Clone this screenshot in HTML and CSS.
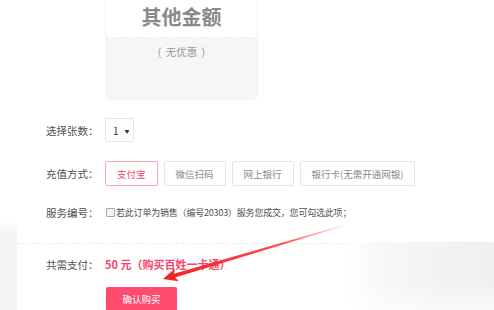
FILE: index.html
```html
<!DOCTYPE html>
<html lang="zh-CN">
<head>
  <meta charset="UTF-8" />
  <meta name="viewport" content="width=device-width, initial-scale=1.0" />
  <title>购买百姓一卡通</title>
  <link rel="stylesheet" href="styles.css">
</head>

<body>
  <div class="wrap">
    <div class="gutter"></div>

    <div class="main">
      <div class="card">
        <div class="card-top">其他金额</div>
        <div class="card-bottom">( 无优惠 )</div>
      </div>

      <div class="row row-count">
        <div class="label">选择张数：</div>
        <div class="select">1 <span class="caret">▼</span></div>
      </div>

      <div class="row row-pay">
        <div class="label">充值方式：</div>
        <div class="pay-list">
          <span class="pay-btn active">支付宝</span>
          <span class="pay-btn">微信扫码</span>
          <span class="pay-btn">网上银行</span>
          <span class="pay-btn">银行卡(无需开通网银)</span>
        </div>
      </div>

      <div class="row row-service">
        <div class="label">服务编号：</div>
        <label class="check"><span class="box"></span>若此订单为销售（编号20303）服务您成交，您可勾选此项；</label>
      </div>

      <div class="divider"></div>

      <div class="row row-total">
        <div class="label">共需支付：</div>
        <div class="total">50 元（购买百姓一卡通）</div>
      </div>

      <button class="buy-btn">确认购买</button>
    </div>
  </div>

  <div class="shade"></div>

  <svg class="arrow" width="494" height="310" viewBox="0 0 494 310">
    <defs>
      <linearGradient id="fade" x1="342" y1="226" x2="170" y2="276" gradientUnits="userSpaceOnUse">
        <stop offset="0" stop-color="#ff3b3b" stop-opacity="0.15" />
        <stop offset="0.35" stop-color="#ff2d2d" stop-opacity="0.85" />
        <stop offset="1" stop-color="#f52222" />
      </linearGradient>
    </defs>
    <polygon points="342.1,226.4 341.9,225.6 173,273.9 174.1,277.8" fill="url(#fade)" />
    <polygon points="163,279 175,268.6 173.6,275.4 178.6,281.2" fill="#f52222" />
  </svg>
</body>
</html>
```

FILE: styles.css
```css
:root {
  --pink: #f7456d;
  --pink-btn: #ff4b70;
  --pink-line: #ffa3b6;
  --line: #ececec;
  --text: #505050;
  --muted: #8a8a8a;
}

body {
  margin: 0;
  width: 494px;
  height: 310px;
  overflow: hidden;
  position: relative;
  background: #fff;
  font-family: "Noto Sans CJK SC", "Microsoft YaHei", sans-serif;
  color: var(--text);
}

.wrap {
  display: flex;
  height: 310px;
}

.gutter {
  flex: none;
  width: 17px;
  background: linear-gradient(#fff 220px, #f3f3f3 236px);
}

.main {
  flex: 1;
  padding-left: 29px;
}

.card {
  margin-left: 59px;
  width: 153px;
  box-sizing: border-box;
  border: 1px solid #f2f2f2;
  border-top: none;
  border-radius: 0 0 5px 5px;
  overflow: hidden;
}

.card-top {
  height: 38px;
  display: flex;
  align-items: center;
  justify-content: center;
  border-bottom: 1px dashed var(--line);
  font-size: 20px;
  font-weight: bold;
  color: var(--muted);
  padding-bottom: 4px;
  box-sizing: border-box;
}

.card-bottom {
  height: 61px;
  background: #f6f6f6;
  text-align: center;
  font-size: 10.5px;
  color: #9a9a9a;
  padding-top: 6px;
  box-sizing: border-box;
  word-spacing: 2px;
}

.row {
  display: flex;
  align-items: center;
}

.label {
  flex: none;
  width: 59px;
  font-size: 10.5px;
  color: var(--text);
}

.row-count {
  margin-top: 18px;
}

.select {
  width: 29px;
  height: 24px;
  box-sizing: border-box;
  border: 1px solid #e6e6e6;
  border-radius: 2px;
  display: flex;
  align-items: center;
  gap: 6px;
  padding-left: 7px;
  font-size: 10px;
  color: #333;
}

.caret {
  font-size: 5px;
  color: #333;
}

.row-pay {
  margin-top: 19px;
}

.pay-list {
  display: flex;
  gap: 6px;
}

.pay-btn {
  height: 25px;
  box-sizing: border-box;
  padding: 0 11px;
  border: 1px solid #e6e6e6;
  border-radius: 2px;
  display: flex;
  align-items: center;
  font-size: 9.5px;
  color: var(--muted);
}

.pay-btn.active {
  border-color: var(--pink-line);
  color: var(--pink);
}

.row-service {
  margin-top: 18px;
  height: 16px;
}

.check {
  display: flex;
  align-items: center;
  font-size: 9px;
  color: var(--text);
  letter-spacing: -0.2px;
}

.box {
  width: 7px;
  height: 7px;
  border: 1px solid #aaa;
  border-radius: 1px;
  background: #f4f4f4;
  margin-right: 1px;
  margin-left: 1px;
}

.divider {
  margin-top: 23px;
  margin-left: -29px;
  width: 331px;
  border-top: 1px dashed var(--line);
}

.row-total {
  margin-top: 12px;
  height: 16px;
}

.total {
  font-size: 11px;
  font-weight: bold;
  color: var(--pink);
}

.buy-btn {
  display: block;
  margin: 15px 0 0 60px;
  width: 71px;
  height: 24px;
  border: none;
  border-radius: 2px;
  background: var(--pink-btn);
  color: #fff;
  font-family: inherit;
  font-size: 9.5px;
  padding: 0;
}

.shade {
  position: absolute;
  left: 348px;
  top: 242px;
  width: 146px;
  height: 68px;
  background:
    linear-gradient(to bottom, rgba(255,255,255,0) 60%, rgba(255,255,255,0.6) 100%),
    linear-gradient(to right, #fff 0%, #f8f8f8 20%, #f3f3f3 55%, #f0f0f0 100%);
}

.arrow {
  position: absolute;
  left: 0;
  top: 0;
  pointer-events: none;
}
```
